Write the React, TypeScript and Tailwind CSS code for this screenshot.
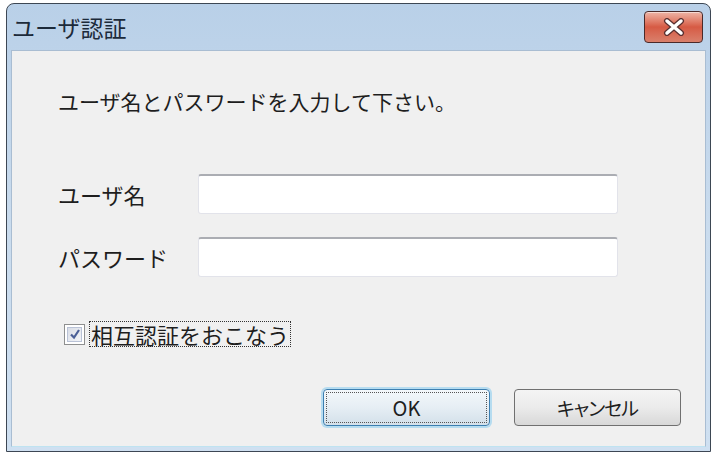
import { useState } from "react";

const JP = "font-['Meiryo_UI','Noto_Sans_CJK_JP',sans-serif]";

function CloseButton() {
  return (
    <button className="w-[59px] h-[32px] rounded-[4px] border border-[#4a2a2a] bg-gradient-to-b from-[#edb4a6] via-[#d65a44] to-[#d9806c] flex items-center justify-center shadow-[inset_0_1px_0_rgba(255,255,255,0.5)]">
      <svg width="22" height="18" viewBox="0 0 22 18">
        <path d="M4 3 L18 15 M18 3 L4 15" stroke="#5a3030" strokeWidth="6" strokeLinecap="round" />
        <path d="M4 3 L18 15 M18 3 L4 15" stroke="#ffffff" strokeWidth="3.5" strokeLinecap="round" />
      </svg>
    </button>
  );
}

function Field({ label }: { label: string }) {
  return (
    <div className="flex items-center">
      <span className="w-[140px] text-[22px] text-[#1e1e1e] leading-none">{label}</span>
      <input
        type="text"
        className="w-[420px] h-[40px] rounded-[3px] bg-white border border-[#e2e3ea] border-t-[#abadb3] border-t-2 outline-none px-2 text-[18px]"
      />
    </div>
  );
}

export default function App() {
  const [mutual, setMutual] = useState(true);

  return (
    <div className={`w-[715px] h-[454px] bg-white pt-[3px] pl-[6px] ${JP}`}>
      <div className="w-[705px] h-[449px] rounded-t-[8px] border border-[#3d4754] bg-gradient-to-b from-[#b9d0e8] via-[#cadcee] to-[#cfe0f1] flex flex-col px-[4px] pb-[4px]">
        {/* title bar */}
        <div className="h-[46px] flex items-center justify-between pl-[1px] pr-[3px]">
          <span className="text-[23px] text-[#1c2a3a] leading-none">ユーザ認証</span>
          <CloseButton />
        </div>

        {/* client area */}
        <div className="flex-1 bg-[#f0f0f0] border border-[#a9bdd2] border-b-[#bfe3f1] flex flex-col pl-[46px] pt-[40px]">
          <p className="text-[21px] text-[#1e1e1e] leading-none">ユーザ名とパスワードを入力して下さい。</p>

          <div className="flex flex-col gap-[23px] mt-[62px]">
            <Field label="ユーザ名" />
            <Field label="パスワード" />
          </div>

          <label className="flex items-center mt-[44px] ml-[6px] cursor-pointer">
            <span
              onClick={() => setMutual(!mutual)}
              className="w-[21px] h-[21px] border border-[#8e8f8f] bg-white p-[2px] shrink-0"
            >
              <span className="w-full h-full border border-[#b9c2d6] bg-gradient-to-br from-[#d9dde6] to-[#f2f4f8] flex items-center justify-center">
                {mutual && (
                  <svg width="12" height="12" viewBox="0 0 12 12">
                    <path d="M2 6.5 L5 9.5 L10 2" fill="none" stroke="#4a5f97" strokeWidth="2.2" />
                  </svg>
                )}
              </span>
            </span>
            <span className="ml-[4px] border border-dotted border-[#333] px-[1px] text-[22px] leading-[24px] text-[#1e1e1e]">
              相互認証をおこなう
            </span>
          </label>

          <div className="flex justify-end gap-[24px] mt-[42px] pr-[24px]">
            <button className="w-[167px] h-[37px] rounded-[4px] border border-[#3c7fb1] shadow-[0_0_0_2px_#b6dcf0] bg-gradient-to-b from-[#f3f8fb] via-[#e6eef4] to-[#d3e0ea] p-[2px]">
              <span className="w-full h-full border border-dotted border-[#555] flex items-center justify-center text-[20px] text-[#1e1e1e] leading-none">
                OK
              </span>
            </button>
            <button className="w-[167px] h-[37px] rounded-[4px] border border-[#707070] bg-gradient-to-b from-[#f4f4f4] via-[#ebebeb] to-[#d8d8d8] text-[19px] text-[#1e1e1e] leading-none [font-feature-settings:'palt'] tracking-[-1px]">
              キャンセル
            </button>
          </div>
        </div>
      </div>
    </div>
  );
}
